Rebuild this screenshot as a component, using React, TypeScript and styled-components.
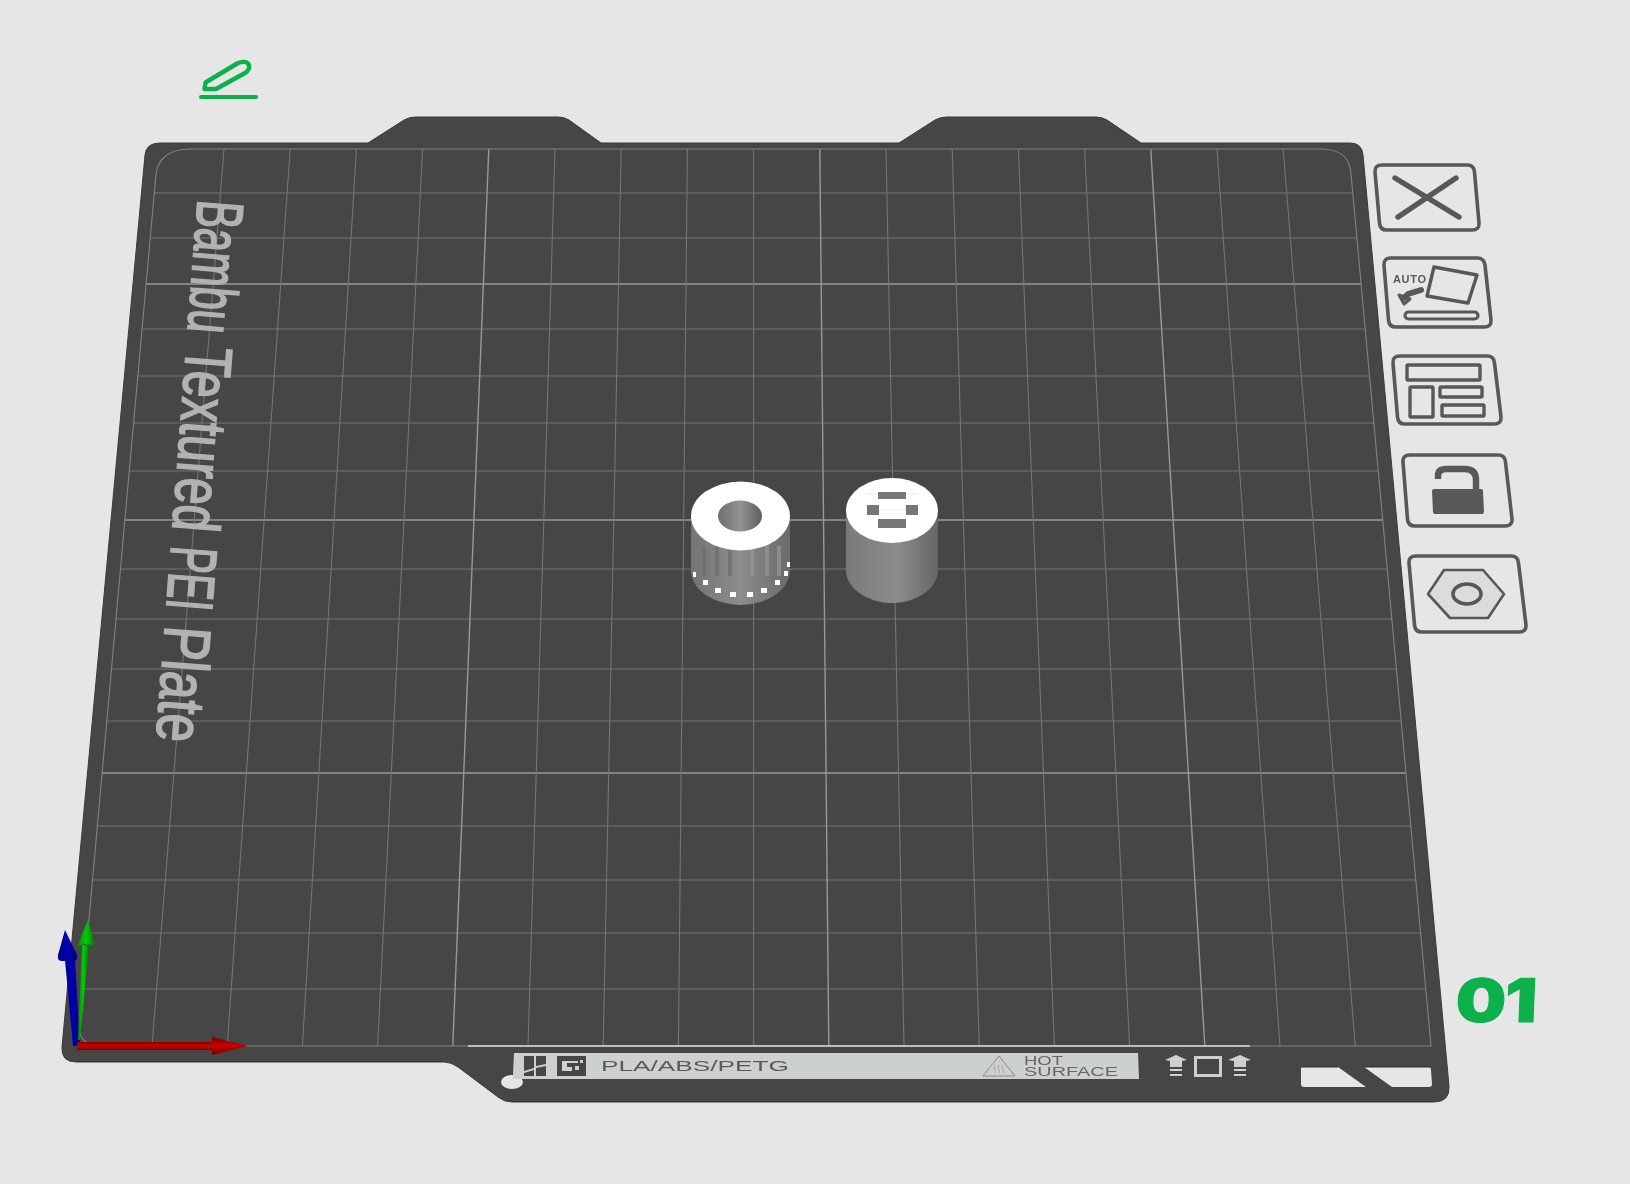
import React from 'react';
import styled, {createGlobalStyle} from 'styled-components';

const GlobalStyle = createGlobalStyle`
  html, body {
    margin: 0;
    padding: 0;
    background: #E6E6E6;
  }
`;

const Viewport = styled.div`
  position: relative;
  width: 1630px;
  height: 1184px;
  overflow: hidden;
  background: #E6E6E6;
  filter: blur(0.45px);
`;
const BedScene = styled.svg`
  display: block;
  width: 1630px;
  height: 1184px;
`;
const GridLine = styled.line<{$major?: boolean}>`
  stroke: ${props => props.$major ? '#979897' : '#747574'};
  stroke-width: ${props => props.$major ? 1.4 : 1.1};
`;
const PlateName = styled.text`
  fill: #B2B2B2;
  stroke: #B2B2B2;
  stroke-width: 1.8px;
  font-family: "Liberation Sans", sans-serif;
  font-size: 66px;
`;
const LabelText = styled.text<{$muted?: boolean}>`
  fill: ${props => props.$muted ? '#666867' : '#585A5A'};
  font-family: "Liberation Sans", sans-serif;
  font-size: ${props => props.$muted ? 12 : 14}px;
`;
const ToolIcon = styled.svg<{$x: number; $y: number; $w: number; $h: number}>`
  position: absolute;
  left: ${props => props.$x}px;
  top: ${props => props.$y}px;
  width: ${props => props.$w}px;
  height: ${props => props.$h}px;
  fill: none;
  stroke: #585858;
  stroke-linejoin: round;
`;
const PlateNumber = styled.div`
  position: absolute;
  left: 1456px;
  top: 963px;
  color: #0DB14B;
  font-family: Inter, sans-serif;
  font-size: 60px;
  font-weight: 900;
  line-height: 74px;
  letter-spacing: -1px;
  -webkit-text-stroke: 1px #0DB14B;
  transform-origin: left center;
  transform: scaleX(1.18) skewX(-2deg);
`;

const BG = '#E6E6E6';
const TOP_Y = 149;
const BOTTOM_Y = 1046;
const ROWS = [193, 238, 284, 329, 376, 423, 471, 520, 569, 619, 669, 721, 773, 826, 880, 933, 989];
const MAJOR_ROWS = [284, 520, 773];
const MAJOR_COLS = [4, 9, 14];

const COLS = Array.from({length: 17}, (_, i) => i);
const topX = (i: number): number => 224 + 66.2 * i;
const bottomX = (i: number): number => 152 + 75.2 * i;
const leftEdge = (y: number): number => 158 - 81 * (y - TOP_Y) / 897;
const rightEdge = (y: number): number => 1349 + 82 * (y - TOP_Y) / 897;

const TEETH = [702, 715, 728, 750, 765, 777];
const TILES: [number, number, number][] = [
    [693, 572, 3], [703, 580, 5], [715, 588, 6], [730, 592, 6], [747, 592, 6], [761, 588, 6], [775, 580, 5], [784, 571, 4], [787, 562, 3]
];

const PLATE_WORDS: {text: string; at: number; length: number}[] = [
    {text: 'Bambu', at: 0, length: 133},
    {text: 'Textured', at: 147, length: 185},
    {text: 'PEI', at: 347, length: 64},
    {text: 'Plate', at: 427, length: 116}
];

const BedGrid = () => (
    <g>
        {ROWS.map(y => (
            <GridLine key={y} $major={MAJOR_ROWS.includes(y)} x1={leftEdge(y)} y1={y} x2={rightEdge(y)} y2={y}/>
        ))}
        {COLS.map(i => (
            <GridLine
                key={i}
                $major={MAJOR_COLS.includes(i)}
                x1={topX(i)}
                y1={TOP_Y}
                x2={bottomX(i)}
                y2={BOTTOM_Y}
            />
        ))}
        <path
            d="M190 149 L1322 149 C1340 149 1350 158 1351 174 L1431 1046 L97 1046 C88 1046 81 1040 79 1030 L156 174 C158 158 170 149 190 149 Z"
            fill="none"
            stroke="#828382"
            strokeWidth="1.1"
        />
        <line x1="468" y1="1046" x2="1250" y2="1046" stroke="#BDBEBD" strokeWidth="2.2"/>
    </g>
);

const AxisArrows = () => (
    <g>
        <path d="M73 1046 L65 960 L75 960 L80 1046 Z" fill="url(#axisBlue)"/>
        <path d="M65 930 L77 955 Q78 961 73 961 L62 961 Q57 961 58 955 Z" fill="url(#axisBlue)"/>
        <path d="M78 1040 L82 945 L89 945 L80 1040 Z" fill="url(#axisGreen)"/>
        <path d="M88 920 L95 947 Q86 941 77 947 Z" fill="url(#axisGreen)"/>
        <rect x="77" y="1042" width="136" height="8" fill="url(#axisRed)"/>
        <path d="M212 1037 L248 1046 L212 1055 Z" fill="url(#axisRedCone)"/>
    </g>
);

const HollowCylinder = () => (
    <g>
        <path d="M691 516 L691 570 A49.5 35 0 0 0 790 570 L790 516 Z" fill="url(#bodyLeft)"/>
        {TEETH.map(x => (
            <rect key={x} x={x} y="546" width="4" height="30" fill={x < 740 ? '#6E6E6E' : '#979797'} opacity="0.7"/>
        ))}
        {TILES.map(([x, y, w]) => (
            <rect key={x} x={x} y={y} width={w} height="5" fill="#FFFFFF"/>
        ))}
        <ellipse cx="740.5" cy="516" rx="49.5" ry="34.5" fill="#FFFFFF"/>
        <ellipse cx="740" cy="516" rx="22" ry="15.5" fill="url(#bodyHole)"/>
    </g>
);

const EmbossedCylinder = () => (
    <g>
        <path d="M846 510 L846 570 A46 33 0 0 0 938 570 L938 510 Z" fill="url(#bodyRight)"/>
        <ellipse cx="892" cy="510.5" rx="46" ry="32.5" fill="#FFFFFF"/>
        <line x1="866" y1="494" x2="918" y2="494" stroke="#E4E4E4"/>
        <line x1="866" y1="510" x2="918" y2="510" stroke="#EDEDED"/>
        <rect x="878" y="492" width="28" height="7" fill="#767776"/>
        <rect x="867" y="505" width="12" height="10" fill="#767776"/>
        <rect x="906" y="505" width="12" height="10" fill="#767776"/>
        <rect x="878" y="519" width="28" height="9" fill="#767776"/>
    </g>
);

const LabelStrip = () => (
    <g>
        <ellipse cx="512" cy="1082" rx="11" ry="7" fill={BG}/>
        <path d="M514 1053 L1138 1053 L1139 1079 L513 1079 L513 1074 Z" fill="#CDD0D1"/>
        <path d="M524 1056 H534 V1068 L524 1071 Z M536 1056 H546 V1064 L536 1066 Z M524 1073 L534 1070 V1076 H524 Z M536 1068 L546 1066 V1076 H536 Z" fill="#454645"/>
        <path fillRule="evenodd" d="M557 1056 H586 V1076 H557 Z M562 1061 V1071 H572 V1067 H567 V1063 H578 V1061 Z" fill="#454645"/>
        <rect x="575" y="1066" width="4" height="4" fill="#CDD0D1"/>
        <rect x="580" y="1060" width="3" height="3" fill="#CDD0D1"/>
        <LabelText x="601" y="1071" textLength="188" lengthAdjust="spacingAndGlyphs">PLA/ABS/PETG</LabelText>
        <path d="M983 1076 L999 1056 L1015 1076 Z" fill="none" stroke="#8A8C8C" strokeWidth="1"/>
        <path d="M995 1065 q-2 3 0 5 q1 2 0 3 M999 1065 q-2 3 0 5 q1 2 0 3 M1003 1065 q-2 3 0 5 q1 2 0 3" fill="none" stroke="#A4A6A6" strokeWidth="1"/>
        <LabelText $muted x="1024" y="1065" textLength="39" lengthAdjust="spacingAndGlyphs">HOT</LabelText>
        <LabelText $muted x="1024" y="1076" textLength="94" lengthAdjust="spacingAndGlyphs">SURFACE</LabelText>
        <path d="M1165 1060 L1176 1055 L1187 1060 L1182 1061 V1067 H1170 V1061 Z M1170 1069 H1182 V1071 H1170 Z M1170 1074 H1182 V1076 H1170 Z" fill="#CDD0D1"/>
        <rect x="1195.5" y="1057.5" width="25" height="18" fill="none" stroke="#CDD0D1" strokeWidth="3"/>
        <path d="M1228 1060 L1240 1055 L1251 1060 L1246 1061 V1067 H1234 V1061 Z M1234 1069 H1246 V1071 H1234 Z M1234 1074 H1246 V1076 H1234 Z" fill="#CDD0D1"/>
        <path d="M1301 1067 H1338 L1366 1087 H1304 Q1301 1087 1301 1084 Z" fill={BG}/>
        <path d="M1364 1067 H1428 Q1431 1067 1431 1070 L1432 1084 Q1432 1087 1429 1087 H1392 Z" fill={BG}/>
        <path d="M1301 1067 H1338 M1364 1067 H1430" stroke="#2F302F" strokeWidth="1"/>
    </g>
);

const App = () => (
    <>
        <GlobalStyle/>
        <Viewport>
            <BedScene viewBox="0 0 1630 1184">
                <defs>
                    <linearGradient id="axisRed" x1="0" y1="0" x2="0" y2="1">
                        <stop offset="0" stopColor="#8A0000"/>
                        <stop offset="0.5" stopColor="#D00000"/>
                        <stop offset="1" stopColor="#800000"/>
                    </linearGradient>
                    <linearGradient id="axisRedCone" x1="0" y1="0" x2="0" y2="1">
                        <stop offset="0" stopColor="#6E0000"/>
                        <stop offset="0.45" stopColor="#CC0000"/>
                        <stop offset="1" stopColor="#6E0000"/>
                    </linearGradient>
                    <linearGradient id="axisBlue" x1="0" y1="0" x2="1" y2="0">
                        <stop offset="0" stopColor="#00008C"/>
                        <stop offset="0.5" stopColor="#0000B0"/>
                        <stop offset="1" stopColor="#000078"/>
                    </linearGradient>
                    <linearGradient id="axisGreen" x1="0" y1="0" x2="1" y2="0">
                        <stop offset="0" stopColor="#008A00"/>
                        <stop offset="0.5" stopColor="#00CC00"/>
                        <stop offset="1" stopColor="#007A00"/>
                    </linearGradient>
                    <linearGradient id="bodyLeft" x1="0" y1="0" x2="1" y2="0">
                        <stop offset="0" stopColor="#747474"/>
                        <stop offset="0.5" stopColor="#8C8C8C"/>
                        <stop offset="1" stopColor="#6A6A6A"/>
                    </linearGradient>
                    <linearGradient id="bodyRight" x1="0" y1="0" x2="1" y2="0">
                        <stop offset="0" stopColor="#7A7A7A"/>
                        <stop offset="0.55" stopColor="#8C8C8C"/>
                        <stop offset="1" stopColor="#666666"/>
                    </linearGradient>
                    <linearGradient id="bodyHole" x1="0" y1="0" x2="1" y2="0">
                        <stop offset="0" stopColor="#6E6E6E"/>
                        <stop offset="0.5" stopColor="#939393"/>
                        <stop offset="1" stopColor="#5E5E5E"/>
                    </linearGradient>
                </defs>

                <path
                    d="M145 155 Q146 143 160 143 L368 143 L404 120 Q409 117 416 117 L558 117 Q564 117 569 120 L601 143 L899 143 L935 120 Q940 117 947 117 L1096 117 Q1102 117 1107 120 L1141 143 L1350 143 Q1362 143 1363 155 L1449 1086 Q1450 1102 1434 1102 L512 1102 Q504 1102 498 1097 L458 1067 Q451 1062 444 1062 L76 1062 Q61 1062 62 1047 Z"
                    fill="#454645"
                    stroke="#393A39"
                    strokeWidth="1"
                />
                <path d="M78 1061.5 H442 M514 1101.5 H1432" stroke="#2E2F2E" strokeWidth="1.2"/>

                <BedGrid/>

                {PLATE_WORDS.map(word => (
                    <PlateName
                        key={word.text}
                        transform="translate(198 199) rotate(94.4)"
                        x={word.at}
                        y="0"
                        textLength={word.length}
                        lengthAdjust="spacingAndGlyphs"
                    >
                        {word.text}
                    </PlateName>
                ))}

                <HollowCylinder/>
                <EmbossedCylinder/>
                <LabelStrip/>
                <AxisArrows/>
            </BedScene>

            <ToolIcon $x={190} $y={50} $w={80} $h={60} viewBox="190 50 80 60">
                <path d="M204.5 89 L205.5 82.5 L238 63 Q247 60 249 65 Q250 70 245 73 L216 89 Z" stroke="#0DB14B" strokeWidth="4.4"/>
                <line x1="201" y1="97" x2="256" y2="97" stroke="#0DB14B" strokeWidth="4.2" strokeLinecap="round"/>
            </ToolIcon>

            <ToolIcon $x={1370} $y={160} $w={115} $h={75} viewBox="1370 160 115 75">
                <path d="M1382 165 H1467 Q1474 165 1474.5 172 L1479 223 Q1479.5 230 1472 230 H1387 Q1380 230 1379.5 223 L1375 172 Q1374.5 165 1382 165 Z" strokeWidth="3.6"/>
                <path d="M1395 178 L1459 217 M1456 178 L1398 217" strokeWidth="5.4" strokeLinecap="round"/>
            </ToolIcon>

            <ToolIcon $x={1380} $y={252} $w={115} $h={80} viewBox="1380 252 115 80">
                <path d="M1391 258 H1477 Q1484 258 1485 265 L1491 320 Q1491.5 327 1484 327 H1396 Q1389 327 1388.5 320 L1384 265 Q1383.5 258 1391 258 Z" strokeWidth="3.6"/>
                <path d="M1434 267 L1477 275 L1468 303 L1427 296 Z" strokeWidth="3.4"/>
                <rect x="1405" y="312" width="73" height="7" rx="3.5" strokeWidth="3.2"/>
                <path d="M1421 290 L1408 294 L1404 298" strokeWidth="6" strokeLinecap="round"/>
                <path d="M1399 295 L1410 299 L1404 304 Z" strokeWidth="3"/>
                <text x="1393" y="283" fill="#585858" stroke="none" fontFamily="Liberation Sans, sans-serif" fontSize="11" fontWeight="700" textLength="33">AUTO</text>
            </ToolIcon>

            <ToolIcon $x={1388} $y={350} $w={118} $h={80} viewBox="1388 350 118 80">
                <path d="M1400 356 H1487 Q1494 356 1494.5 363 L1501 417 Q1501.5 424 1494 424 H1405 Q1398 424 1397.5 417 L1393 363 Q1392.5 356 1400 356 Z" strokeWidth="3.6"/>
                <rect x="1407" y="365" width="73" height="15" rx="1" strokeWidth="3.4"/>
                <rect x="1410" y="387" width="23" height="30" rx="1" strokeWidth="3.4"/>
                <rect x="1440" y="387" width="42" height="10" rx="1" strokeWidth="3.4"/>
                <rect x="1442" y="405" width="42" height="11" rx="1" strokeWidth="3.4"/>
            </ToolIcon>

            <ToolIcon $x={1398} $y={450} $w={120} $h={82} viewBox="1398 450 120 82">
                <path d="M1410 455 H1498 Q1505 455 1505.5 462 L1512 519 Q1512.5 526 1505 526 H1415 Q1408 526 1407.5 519 L1403 462 Q1402.5 455 1410 455 Z" strokeWidth="3.6"/>
                <path d="M1438 479 V476 Q1438 469 1446 469 H1465 Q1476 469 1476 480 V490" strokeWidth="6.4"/>
                <path d="M1434 489 H1481 Q1483 489 1483 491 L1484 512 Q1484 514 1482 514 H1435 Q1433 514 1433 512 L1432 491 Q1432 489 1434 489 Z" fill="#585858" stroke="none"/>
            </ToolIcon>

            <ToolIcon $x={1404} $y={550} $w={128} $h={88} viewBox="1404 550 128 88">
                <path d="M1416 556 H1511 Q1518 556 1518.5 563 L1526 625 Q1526.5 632 1519 632 H1422 Q1415 632 1414.5 625 L1409 563 Q1408.5 556 1416 556 Z" strokeWidth="3.6"/>
                <path d="M1428 594 L1444 570 H1483 L1504 594 L1488 618 H1450 Z" fill="#DCDCDC" strokeWidth="2.6"/>
                <ellipse cx="1467" cy="594" rx="14" ry="10" fill="#DCDCDC" strokeWidth="3.6"/>
            </ToolIcon>

            <PlateNumber>01</PlateNumber>
        </Viewport>
    </>
);

export default App;
